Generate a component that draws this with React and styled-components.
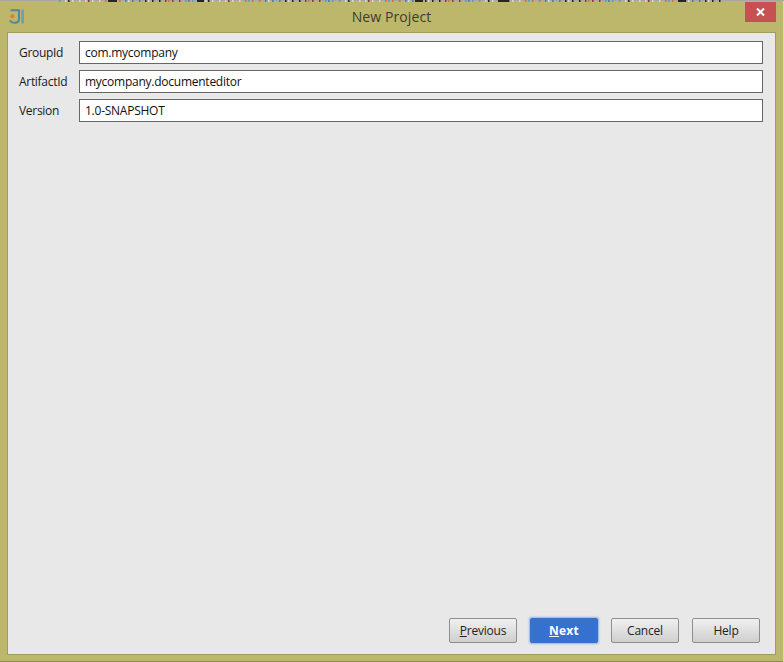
import React from "react";
import styled, { createGlobalStyle } from "styled-components";

const GlobalStyle = createGlobalStyle`
  html, body {
    margin: 0;
    padding: 0;
    background: #d8d8d0;
  }
  * {
    box-sizing: border-box;
  }
`;

const fields = [
  { label: "GroupId", value: "com.mycompany" },
  { label: "ArtifactId", value: "mycompany.documenteditor" },
  { label: "Version", value: "1.0-SNAPSHOT" },
];

const tickColors = ["#c77b2e", "#3f7fb5", "#222", "#8a3a3a", "#5a9bd0", "#d8d8d0", "#d8d8d0"];
const darkSpots = [
  [108, 9],
  [197, 7],
  [415, 8],
  [498, 11],
  [678, 8],
];

// strip of the window behind the dialog, only 2px of it shows
const Ticks = () => {
  const ticks = [];
  for (let x = 59; x < 725; x += 3 + ((x * 7) % 5)) {
    ticks.push(<rect key={x} x={x} y="0" width="1.5" height="2" fill={tickColors[(x * 13) % 7]} />);
  }
  return (
    <TickSvg width="784" height="2" viewBox="0 0 784 2">
      <rect x="0" y="0" width="784" height="1" fill="#a8a8a0" />
      {ticks}
      {darkSpots.map(([x, w]) => (
        <rect key={x} x={x} y="0" width={w} height="2" fill="#262626" />
      ))}
    </TickSvg>
  );
};

const ProjectIcon = () => (
  <svg width="16" height="16" viewBox="0 0 16 16">
    <path d="M1.5 1.2H10V10C10 12.6 8.4 13.8 6 13.8C3.6 13.8 1.8 13 1 11.4" fill="none" stroke="#55859f" strokeWidth="2" />
    <path d="M13.6 0.5V14.5" stroke="#6f9db5" strokeWidth="2.6" />
    <circle cx="3.4" cy="7.2" r="2" fill="#d9822b" />
  </svg>
);

const CloseIcon = () => (
  <svg width="9" height="8" viewBox="0 0 9 8">
    <path d="M1 0.5L8 7.5M8 0.5L1 7.5" stroke="#fff" strokeWidth="2" />
  </svg>
);

export default function App() {
  return (
    <Page>
      <GlobalStyle />
      <Ticks />
      <Dialog>
        <TitleBar>
          <IconSlot>
            <ProjectIcon />
          </IconSlot>
          <Title>New Project</Title>
          <CloseButton>
            <CloseIcon />
          </CloseButton>
        </TitleBar>
        <Panel>
          <Form>
            {fields.map((f) => (
              <Row key={f.label}>
                <Label>{f.label}</Label>
                <Input>{f.value}</Input>
              </Row>
            ))}
          </Form>
          <Footer>
            <Button>
              <u>P</u>revious
            </Button>
            <Button primary>
              <u>N</u>ext
            </Button>
            <Button>Cancel</Button>
            <Button>Help</Button>
          </Footer>
        </Panel>
      </Dialog>
    </Page>
  );
}

const Page = styled.div`
  width: 784px;
  height: 662px;
  overflow: hidden;
  font-family: "Open Sans", "Noto Sans", sans-serif;
`;
const TickSvg = styled.svg`
  display: block;
  position: absolute;
  top: 0;
  left: 0;
`;
const Dialog = styled.div`
  width: 783px;
  height: 662px;
  padding-top: 2px;
  background: #bdb76b;
  border-bottom: 1px solid #8f8a55;
  border-top: 1px solid transparent;
  display: flex;
  flex-direction: column;
`;
const TitleBar = styled.div`
  height: 29px;
  display: flex;
  position: relative;
  justify-content: center;
  align-items: center;
`;
const IconSlot = styled.div`
  position: absolute;
  left: 9px;
  top: 6px;
  line-height: 0;
`;
const Title = styled.div`
  font-size: 14px;
  letter-spacing: 0.1px;
  color: #3c3c34;
  margin-top: -3px;
`;
const CloseButton = styled.div`
  position: absolute;
  top: -1px;
  left: 745px;
  width: 31px;
  height: 20px;
  background: #c75050;
  display: flex;
  align-items: center;
  justify-content: center;
`;
const Panel = styled.div`
  flex: 1;
  margin: 0 7px 6px 7px;
  background: #e8e8e8;
  border: 1px solid #a19b5d;
  padding: 8px 12px 11px 11px;
  display: flex;
  flex-direction: column;
  justify-content: space-between;
`;
const Form = styled.div`
  display: flex;
  flex-direction: column;
  gap: 6px;
`;
const Row = styled.div`
  display: flex;
  align-items: center;
`;
const Label = styled.div`
  width: 60px;
  font-size: 12px;
  letter-spacing: -0.3px;
  color: #1a1a1a;
`;
const Input = styled.div`
  flex: 1;
  height: 23px;
  background: #fff;
  border: 1px solid #666;
  padding-left: 5px;
  font-size: 12px;
  letter-spacing: -0.25px;
  line-height: 22px;
  color: #111;
`;
const Footer = styled.div`
  display: flex;
  justify-content: flex-end;
  gap: 13px;
  padding-right: 3px;
`;
const Button = styled.div`
  width: 68px;
  height: 25px;
  border-radius: 2px;
  font-size: 12px;
  line-height: 23px;
  text-align: center;
  letter-spacing: ${(p) => (p.primary ? "0.2px" : "-0.2px")};
  color: ${(p) => (p.primary ? "#fff" : "#222")};
  font-weight: ${(p) => (p.primary ? 700 : 400)};
  border: 1px solid ${(p) => (p.primary ? "#3771cf" : "#8e8e8e")};
  background: ${(p) => (p.primary ? "#3771cf" : "linear-gradient(#f0f0f0, #cfcfcf)")};
  box-shadow: ${(p) => (p.primary ? "0 0 2px 1px #8fb4e6" : "none")};
`;
